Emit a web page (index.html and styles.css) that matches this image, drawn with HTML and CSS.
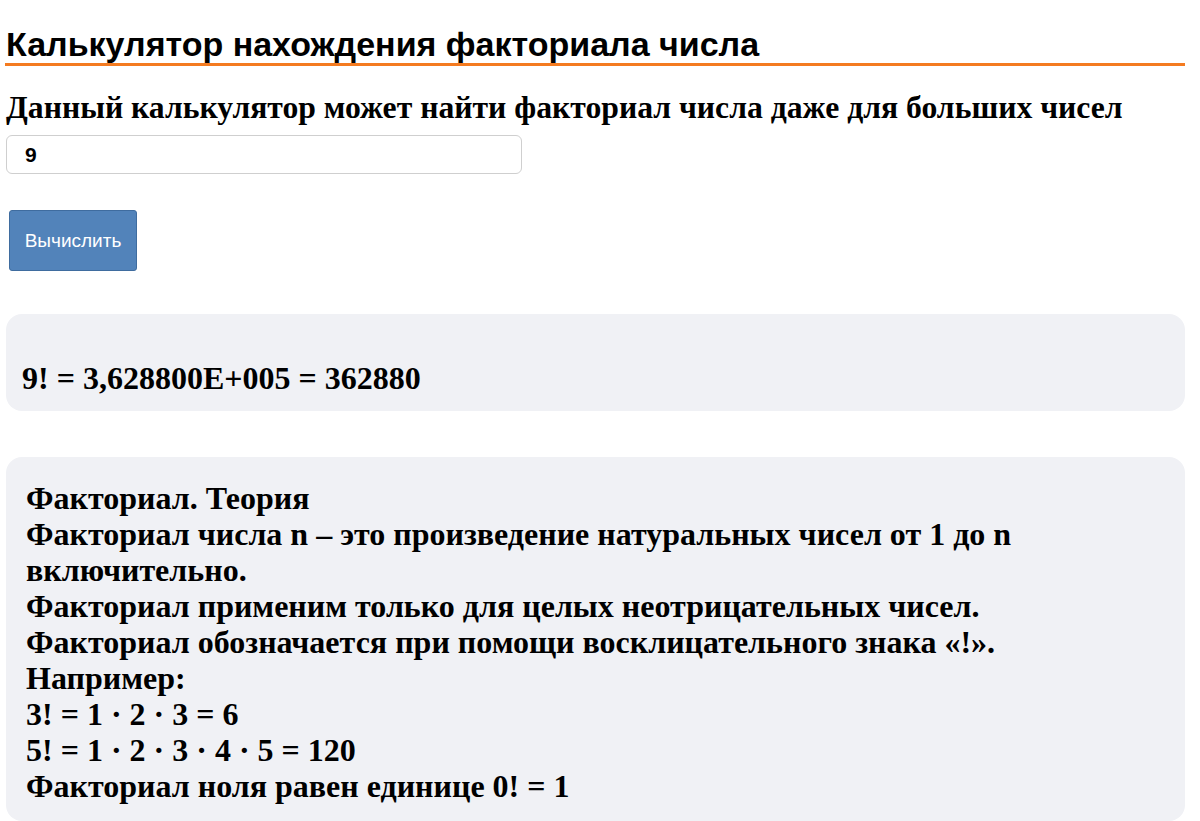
FILE: index.html
```html
<!DOCTYPE html>
<html lang="ru">
<head>
<meta charset="utf-8">
<title>Калькулятор нахождения факториала числа</title>
<link rel="stylesheet" href="styles.css">
</head>
<body>
<div class="page">
  <h1 class="title">Калькулятор нахождения факториала числа</h1>
  <p class="lead">Данный калькулятор может найти факториал числа даже для больших чисел</p>
  <input class="num" type="text" value="9">
  <div class="actions"><button class="calc" type="button">Вычислить</button></div>
  <div class="box result">9! = 3,628800E+005 = 362880</div>
  <div class="box theory">
    Факториал. Теория<br>
    Факториал числа n – это произведение натуральных чисел от 1 до n включительно.<br>
    Факториал применим только для целых неотрицательных чисел.<br>
    Факториал обозначается при помощи восклицательного знака «!».<br>
    Например:<br>
    3! = 1 · 2 · 3 = 6<br>
    5! = 1 · 2 · 3 · 4 · 5 = 120<br>
    Факториал ноля равен единице 0! = 1
  </div>
</div>
</body>
</html>
```
FILE: styles.css
```css
html, body {
  margin: 0;
  padding: 0;
  background: #ffffff;
  color: #000000;
}
.page {
  margin-left: 5px;
  width: 1180px;
  padding-top: 25px;
}
.title {
  font-family: "Liberation Sans", Arial, sans-serif;
  font-weight: bold;
  font-size: 34px;
  line-height: 38px;
  margin: 0;
  padding-left: 1px;
  padding-bottom: 0;
  border-bottom: 3px solid #f47b20;
}
.lead {
  font-family: "Liberation Serif", "Times New Roman", serif;
  font-weight: bold;
  font-size: 31.7px;
  line-height: 36px;
  margin: 24px 0 0 1px;
}
.num {
  display: block;
  box-sizing: border-box;
  width: 516px;
  height: 39px;
  margin: 9px 0 0 1px;
  padding: 0 18px;
  border: 1.5px solid #cfcfcf;
  border-radius: 6px;
  font-family: "Liberation Sans", Arial, sans-serif;
  font-weight: bold;
  font-size: 21px;
  color: #000;
  background: #fff;
  outline: none;
}
.actions {
  padding: 36px 0 0 4px;
}
.calc {
  display: block;
  box-sizing: border-box;
  width: 128px;
  height: 61px;
  background: #5283ba;
  border: 1px solid #3f6c9f;
  border-radius: 3px;
  color: #ffffff;
  font-family: "Liberation Sans", Arial, sans-serif;
  font-size: 19px;
  padding: 0;
}
.box {
  background: #f0f1f5;
  border-radius: 16px;
  font-family: "Liberation Serif", "Times New Roman", serif;
  font-weight: bold;
  font-size: 32px;
  line-height: 36px;
  box-sizing: border-box;
  margin-left: 1px;
}
.result {
  margin-top: 43px;
  height: 97px;
  padding: 46px 16px 0 16px;
}
.theory {
  margin-top: 46px;
  height: 364px;
  padding: 23px 20px 0 20px;
}
```
